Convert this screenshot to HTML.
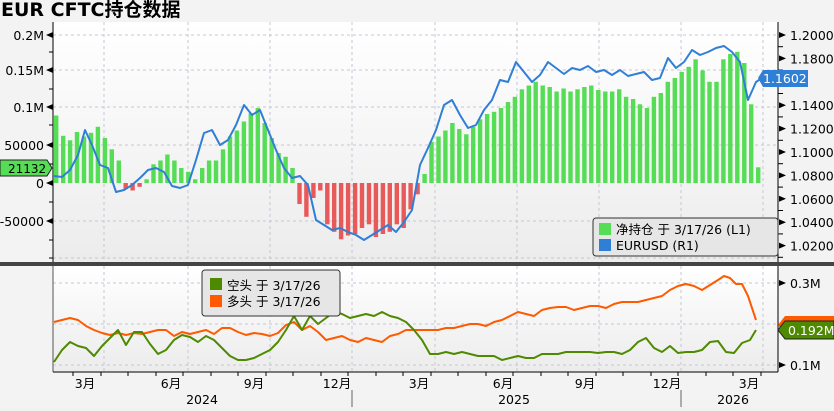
<!DOCTYPE html>
<html><head><meta charset="utf-8"><style>
body{margin:0;width:834px;height:407px;overflow:hidden;background:#f2f2f2;font-family:"DejaVu Sans","Noto Sans CJK SC",sans-serif;}
svg text{font-family:"DejaVu Sans","Noto Sans CJK SC",sans-serif;}
</style></head><body>
<svg id="s" width="834" height="407" xmlns="http://www.w3.org/2000/svg">
<defs>
<linearGradient id="bg" x1="0" y1="0" x2="0" y2="1"><stop offset="0" stop-color="#ffffff"/><stop offset="1" stop-color="#ececec"/></linearGradient>
</defs>
<rect x="0" y="0" width="834" height="407" fill="#f3f3f3"/>
<rect x="53" y="22" width="725" height="240" fill="url(#bg)"/>
<rect x="53" y="266" width="725" height="106" fill="url(#bg)"/>
<text x="1" y="16" font-size="19" font-weight="bold" fill="#000">EUR CFTC持仓数据</text>
<g id="grid" stroke="#c4c8d4" stroke-dasharray="3,3" stroke-width="1"></g>
<g id="bars"></g>
<g id="lines" fill="none" stroke-width="2" stroke-linejoin="round"></g>
<rect x="0" y="262" width="834" height="4" fill="#444"/>
<g id="axes" font-size="12.5" fill="#000"></g>
<g>
<rect x="593" y="218" width="185" height="38" rx="3" fill="#e6e6e6" stroke="#333"/>
<rect x="599" y="223" width="12" height="12" fill="#55dd55"/>
<text x="616" y="234" font-size="12.5">净持仓 于 3/17/26 (L1)</text>
<rect x="599" y="239" width="12" height="12" fill="#2f7fd6"/>
<text x="616" y="250" font-size="12.5">EURUSD (R1)</text>
</g>
<g>
<rect x="202" y="270" width="138" height="46" rx="3" fill="#e6e6e6" stroke="#333"/>
<rect x="210" y="278" width="12" height="12" fill="#4e8a00"/>
<text x="227" y="290" font-size="12.5">空头 于 3/17/26</text>
<rect x="210" y="295" width="12" height="12" fill="#ff5a00"/>
<text x="227" y="306" font-size="12.5">多头 于 3/17/26</text>
</g>
<polygon points="0,160 47,160 52,168 47,176 0,176" fill="#55dd55" stroke="#222"/>
<text x="8" y="173" font-size="12">21132</text>
<polygon points="758,78 763,70 808,70 808,87 763,87" fill="#2f7fd6"/>
<text x="763" y="83" font-size="12.5" fill="#fff">1.1602</text>
<polygon points="778,325 785,316 834,316 834,334 785,334" fill="#ff5a00"/>
<text x="788" y="331" font-size="12.5" fill="#fff">0.213M</text>
<polygon points="778,330 785,321 834,321 834,339 785,339" fill="#4e8a00" stroke="#222"/>
<text x="788" y="335" font-size="12.5" fill="#fff">0.192M</text>
</svg>
<script>
var NS="http://www.w3.org/2000/svg";
function el(p,t,a,txt){var e=document.createElementNS(NS,t);for(var k in a)e.setAttribute(k,a[k]);if(txt)e.textContent=txt;document.getElementById(p).appendChild(e);return e;}
var gx=[104,188,270,352,435,517,599,681,763];
gx.forEach(function(x){el('grid','line',{x1:x,y1:22,x2:x,y2:262});el('grid','line',{x1:x,y1:266,x2:x,y2:372});});
[35,70,107,145,221,258].forEach(function(y){el('grid','line',{x1:53,y1:y,x2:778,y2:y});});
[283,324,365].forEach(function(y){el('grid','line',{x1:53,y1:y,x2:778,y2:y});});
var v=[90,63,57,68,62,67,75,60,45,30,-8,-10,-5,5,25,30,38,30,20,15,5,20,30,30,45,62,70,82,93,100,80,60,40,35,20,-28,-45,-20,-10,-55,-65,-75,-70,-68,-60,-55,-72,-68,-65,-55,-60,-35,-15,12,55,62,70,80,72,65,75,85,92,95,100,108,115,125,130,135,130,128,122,126,122,125,128,130,124,122,122,125,115,112,105,100,115,120,135,140,148,155,165,150,135,135,165,172,175,160,105,21];
for(var i=0;i<v.length;i++){var x=54+i*6.95,h=v[i]*0.75;el('bars','rect',{x:x.toFixed(1),y:(h>0?183-h:183).toFixed(1),width:4.4,height:Math.abs(h).toFixed(1),fill:h>0?'#55dd55':'#e85a5a'});}
function pl(pts,c){var d='';for(var i=0;i<pts.length;i+=2)d+=(i?'L':'M')+pts[i]+','+pts[i+1];el('lines','path',{d:d,stroke:c});}
pl([54,176,62,177,70,170,78,155,85,130,92,145,100,165,108,168,116,192,124,190,132,185,140,178,148,170,156,168,164,172,172,186,180,188,188,185,196,160,204,133,212,130,220,145,228,140,236,125,244,105,252,115,260,110,268,130,276,150,284,168,292,178,300,176,308,185,316,220,324,225,332,230,340,228,348,232,356,235,364,240,372,235,380,230,388,225,396,232,404,222,412,210,420,165,428,148,436,130,444,105,452,100,460,115,468,128,476,125,484,110,492,100,500,80,508,82,516,62,524,72,532,82,540,75,548,62,556,68,564,74,572,68,580,70,588,66,596,72,604,70,612,75,620,70,628,76,636,74,644,72,652,80,660,78,668,58,676,68,684,62,692,50,700,55,708,52,716,48,724,46,732,52,740,62,748,100,756,82,762,78],'#2f7fd6');
pl([54,322,62,320,70,318,78,320,86,326,94,330,102,333,110,335,118,333,126,335,134,333,142,334,150,332,158,330,166,330,174,336,182,332,190,334,198,332,206,330,214,334,222,328,230,328,238,332,246,335,254,333,262,334,270,336,278,333,286,325,294,322,302,330,310,326,318,332,326,340,334,338,342,336,350,340,358,342,366,338,374,340,382,342,390,336,398,334,406,330,414,330,422,330,430,330,438,330,446,328,454,328,462,326,470,324,478,324,486,326,494,322,502,320,510,316,518,312,526,314,534,316,542,310,550,308,558,307,566,307,574,310,582,308,590,306,598,306,606,308,614,304,622,302,630,302,638,302,646,300,654,298,662,296,670,290,678,286,686,284,694,286,702,290,710,285,718,280,724,276,730,278,736,284,742,284,748,296,756,320],'#ff5a00');
pl([54,362,62,350,70,342,78,346,86,348,94,356,102,346,110,338,118,330,126,345,134,332,142,332,150,344,158,354,166,350,174,340,182,335,190,337,198,342,206,336,214,340,222,348,230,356,238,360,246,360,254,358,262,354,270,350,278,342,286,330,294,316,302,330,310,316,318,324,326,318,334,312,342,314,350,318,358,316,366,314,374,316,382,312,390,316,398,318,406,322,414,330,422,340,430,354,438,354,446,352,454,354,462,352,470,354,478,356,486,356,494,356,502,360,510,358,518,356,526,358,534,358,542,354,550,354,558,354,566,352,574,352,582,352,590,352,598,353,606,352,614,352,622,354,630,350,638,342,646,338,654,348,662,352,670,346,678,353,686,352,694,352,702,350,710,342,718,341,726,352,734,353,742,343,750,340,756,330],'#4e8a00');
el('axes','line',{x1:53,y1:22,x2:53,y2:262,stroke:'#000'});
el('axes','line',{x1:53,y1:266,x2:53,y2:372,stroke:'#555'});
el('axes','line',{x1:778,y1:22,x2:778,y2:262,stroke:'#000'});
el('axes','line',{x1:778,y1:266,x2:778,y2:372,stroke:'#000'});
el('axes','line',{x1:53,y1:372,x2:778,y2:372,stroke:'#000'});
[['0.2M',35],['0.15M',70],['0.1M',107],['50000',145],['0',183],['-50000',221]].forEach(function(a){el('axes','text',{x:44,y:a[1]+5,'text-anchor':'end'},a[0]);el('axes','polygon',{points:'46,'+a[1]+' 53,'+(a[1]-3)+' 53,'+(a[1]+3)});});
[52,89,125,164,202,240,258].forEach(function(y){el('axes','line',{x1:49,y1:y,x2:53,y2:y,stroke:'#000'});});
var r=['1.2000','1.1800','1.1600','1.1400','1.1200','1.1000','1.0800','1.0600','1.0400','1.0200'];
r.forEach(function(t,i){var y=35+i*23.4;el('axes','line',{x1:778,y1:y+11.7,x2:783,y2:y+11.7,stroke:'#000'});if(i==2)return;el('axes','text',{x:790,y:y+5},t);el('axes','polygon',{points:'786,'+y+' 779,'+(y-3)+' 779,'+(y+3)});});
[['0.3M',283],['0.1M',365]].forEach(function(a){el('axes','text',{x:790,y:a[1]+5},a[0]);el('axes','polygon',{points:'786,'+a[1]+' 779,'+(a[1]-3)+' 779,'+(a[1]+3)});});
[['3月',85],['6月',171],['9月',254],['12月',337],['3月',419],['6月',503],['9月',585],['12月',667],['3月',749]].forEach(function(a){el('axes','text',{x:a[1],y:388,'text-anchor':'middle'},a[0]);});
for(var x=73;x<778;x+=27.5)el('axes','line',{x1:x.toFixed(0),y1:372,x2:x.toFixed(0),y2:376,stroke:'#000'});
[['2024',202],['2025',514],['2026',733]].forEach(function(a){el('axes','text',{x:a[1],y:404,'text-anchor':'middle'},a[0]);});
[352,681].forEach(function(x){el('axes','line',{x1:x,y1:390,x2:x,y2:407,stroke:'#666'});});
</script>
</body></html>
